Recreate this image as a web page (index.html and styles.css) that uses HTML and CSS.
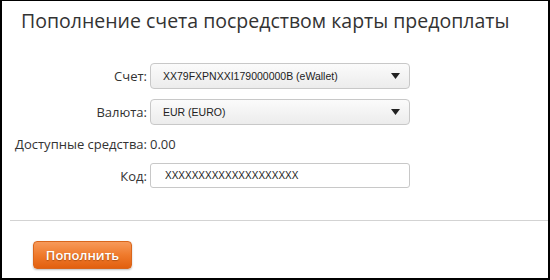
FILE: index.html
```html
<!DOCTYPE html>
<html lang="ru">
<head>
  <meta charset="UTF-8" />
  <title>Пополнение счета</title>
  <link rel="stylesheet" href="styles.css">
</head>
<body>
  <div class="page">
    <h1 class="title">Пополнение счета посредством карты предоплаты</h1>

    <form class="form">
      <label class="label">Счет:</label>
      <div class="select">
        <span>XX79FXPNXXI179000000B (eWallet)</span>
        <svg class="arrow" width="9" height="6" viewBox="0 0 9 6"><path d="M0 0h9L4.5 6z" fill="#222"/></svg>
      </div>

      <label class="label">Валюта:</label>
      <div class="select">
        <span>EUR (EURO)</span>
        <svg class="arrow" width="9" height="6" viewBox="0 0 9 6"><path d="M0 0h9L4.5 6z" fill="#222"/></svg>
      </div>

      <span class="label">Доступные средства:</span>
      <span class="value">0.00</span>

      <label class="label">Код:</label>
      <input class="input" type="text" value="XXXXXXXXXXXXXXXXXXXX">
    </form>

    <hr class="divider">

    <div class="actions">
      <button class="btn" type="button">Пополнить</button>
    </div>
  </div>
</body>
</html>
```

FILE: styles.css
```css
* {
  box-sizing: border-box;
  margin: 0;
  padding: 0;
}

body {
  font-family: 'Open Sans', sans-serif;
  color: #333;
  background: #fff;
}

.page {
  width: 550px;
  height: 280px;
  border: 2px solid #000;
  border-top-width: 1px;
  background: #fff;
  overflow: hidden;
}

.title {
  font-size: 19.5px;
  font-weight: normal;
  color: #333;
  padding: 6px 0 0 19px;
  line-height: 28px;
}

.form {
  display: grid;
  grid-template-columns: 145px 260px;
  column-gap: 3px;
  row-gap: 10px;
  align-items: center;
  margin-top: 28px;
}

.label {
  text-align: right;
  font-size: 13px;
  color: #333;
  white-space: nowrap;
}

.value {
  font-size: 13px;
  color: #333;
}

.select {
  height: 26px;
  border: 1px solid #c8c8c8;
  border-radius: 4px;
  background: linear-gradient(#fbfbfb, #ececec);
  display: flex;
  align-items: center;
  justify-content: space-between;
  padding: 0 9px 0 12px;
  font-family: 'Liberation Sans', sans-serif;
  font-size: 10.5px;
  color: #222;
}

.input {
  height: 25px;
  border: 1px solid #c8c8c8;
  border-radius: 3px;
  padding: 0 14px;
  font-family: 'Liberation Sans', sans-serif;
  font-size: 10px;
  color: #222;
  background: #fff;
}

.divider {
  border: 0;
  border-top: 1px solid #d3d3d3;
  margin: 32px 0 0 8px;
}

.actions {
  padding: 20px 0 0 31px;
}

.btn {
  width: 99px;
  height: 28px;
  border: 1px solid #d9661c;
  border-radius: 4px;
  background: linear-gradient(#f79a5a, #ef7a2c 50%, #e2600f);
  color: #fff;
  font-family: 'Open Sans', sans-serif;
  font-size: 13px;
  font-weight: 600;
  text-shadow: 0 1px 1px rgba(120, 50, 0, 0.5);
  box-shadow: 0 1px 2px rgba(0, 0, 0, 0.25);
}
```
